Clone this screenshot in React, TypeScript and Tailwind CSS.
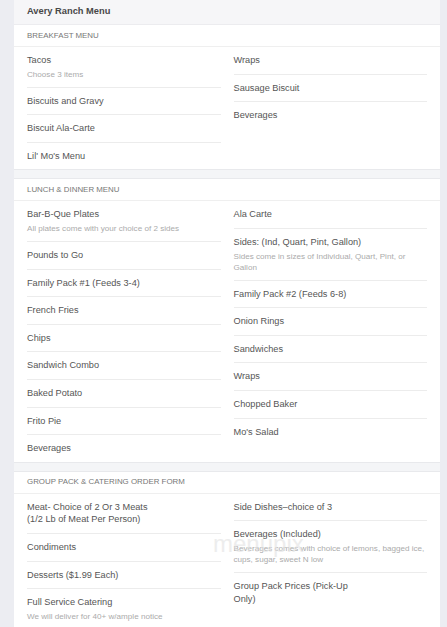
import React from 'react';

type Item = { title: string; sub?: string };
type Section = { name: string; left: Item[]; right: Item[] };

const sections: Section[] = [
  {
    name: 'Breakfast Menu',
    left: [
      { title: 'Tacos', sub: 'Choose 3 items' },
      { title: 'Biscuits and Gravy' },
      { title: 'Biscuit Ala-Carte' },
      { title: "Lil' Mo's Menu" },
    ],
    right: [{ title: 'Wraps' }, { title: 'Sausage Biscuit' }, { title: 'Beverages' }],
  },
  {
    name: 'Lunch & Dinner Menu',
    left: [
      { title: 'Bar-B-Que Plates', sub: 'All plates come with your choice of 2 sides' },
      { title: 'Pounds to Go' },
      { title: 'Family Pack #1 (Feeds 3-4)' },
      { title: 'French Fries' },
      { title: 'Chips' },
      { title: 'Sandwich Combo' },
      { title: 'Baked Potato' },
      { title: 'Frito Pie' },
      { title: 'Beverages' },
    ],
    right: [
      { title: 'Ala Carte' },
      {
        title: 'Sides: (Ind, Quart, Pint, Gallon)',
        sub: 'Sides come in sizes of Individual, Quart, Pint, or Gallon',
      },
      { title: 'Family Pack #2 (Feeds 6-8)' },
      { title: 'Onion Rings' },
      { title: 'Sandwiches' },
      { title: 'Wraps' },
      { title: 'Chopped Baker' },
      { title: "Mo's Salad" },
    ],
  },
  {
    name: 'Group Pack & Catering Order Form',
    left: [
      { title: 'Meat- Choice of 2 Or 3 Meats (1/2 Lb of Meat Per Person)' },
      { title: 'Condiments' },
      { title: 'Desserts ($1.99 Each)' },
      { title: 'Full Service Catering', sub: 'We will deliver for 40+ w/ample notice' },
    ],
    right: [
      { title: 'Side Dishes–choice of 3' },
      {
        title: 'Beverages (Included)',
        sub: 'Beverages comes with choice of lemons, bagged ice, cups, sugar, sweet N low',
      },
      { title: 'Group Pack Prices (Pick-Up Only)' },
    ],
  },
];

const MenuRow = ({ item, last }: { item: Item; last: boolean }) => (
  <div className={`py-[7px] ${last ? '' : 'border-b border-[#ececec]'}`}>
    <div className="max-w-[70%] text-[9.2px] leading-[12.6px] text-[#555]">{item.title}</div>
    {item.sub && (
      <div className="mt-[2px] text-[8.1px] leading-[11px] text-[#ababab]">{item.sub}</div>
    )}
  </div>
);

const MenuSection = ({ section, first }: { section: Section; first: boolean }) => (
  <div className={first ? '' : 'mt-[8px] border-t border-[#e8e9ec]'}>
    <div className="h-[22px] flex items-center px-[13px] border-b border-[#efefef] text-[7.9px] uppercase text-[#777]">
      {section.name}
    </div>
    <div className="grid grid-cols-2 gap-x-[13px] px-[13px] border-b border-[#e8e9ec]">
      <div className="flex flex-col">
        {section.left.map((it, i) => (
          <MenuRow key={i} item={it} last={i === section.left.length - 1} />
        ))}
      </div>
      <div className="flex flex-col">
        {section.right.map((it, i) => (
          <MenuRow key={i} item={it} last={i === section.right.length - 1} />
        ))}
      </div>
    </div>
  </div>
);

export default function App() {
  return (
    <div
      className="min-h-screen bg-[#ecedf2] pl-[14px] pr-[7px]"
      style={{ fontFamily: '"Liberation Sans", Arial, sans-serif' }}
    >
      <div className="relative bg-[#f4f5f7]">
        <div className="h-[25px] flex items-center px-[13px] bg-[#f6f6f8] border-b border-[#ececef] text-[9.3px] font-bold text-[#484848]">
          Avery Ranch Menu
        </div>
        {sections.map((s, i) => (
          <div key={s.name} className="bg-white">
            <MenuSection section={s} first={i === 0} />
          </div>
        ))}
        <div className="absolute left-[199px] top-[526px] text-[24px] font-light text-[#e2e2e2] opacity-60 pointer-events-none">
          menupix
        </div>
      </div>
    </div>
  );
}
